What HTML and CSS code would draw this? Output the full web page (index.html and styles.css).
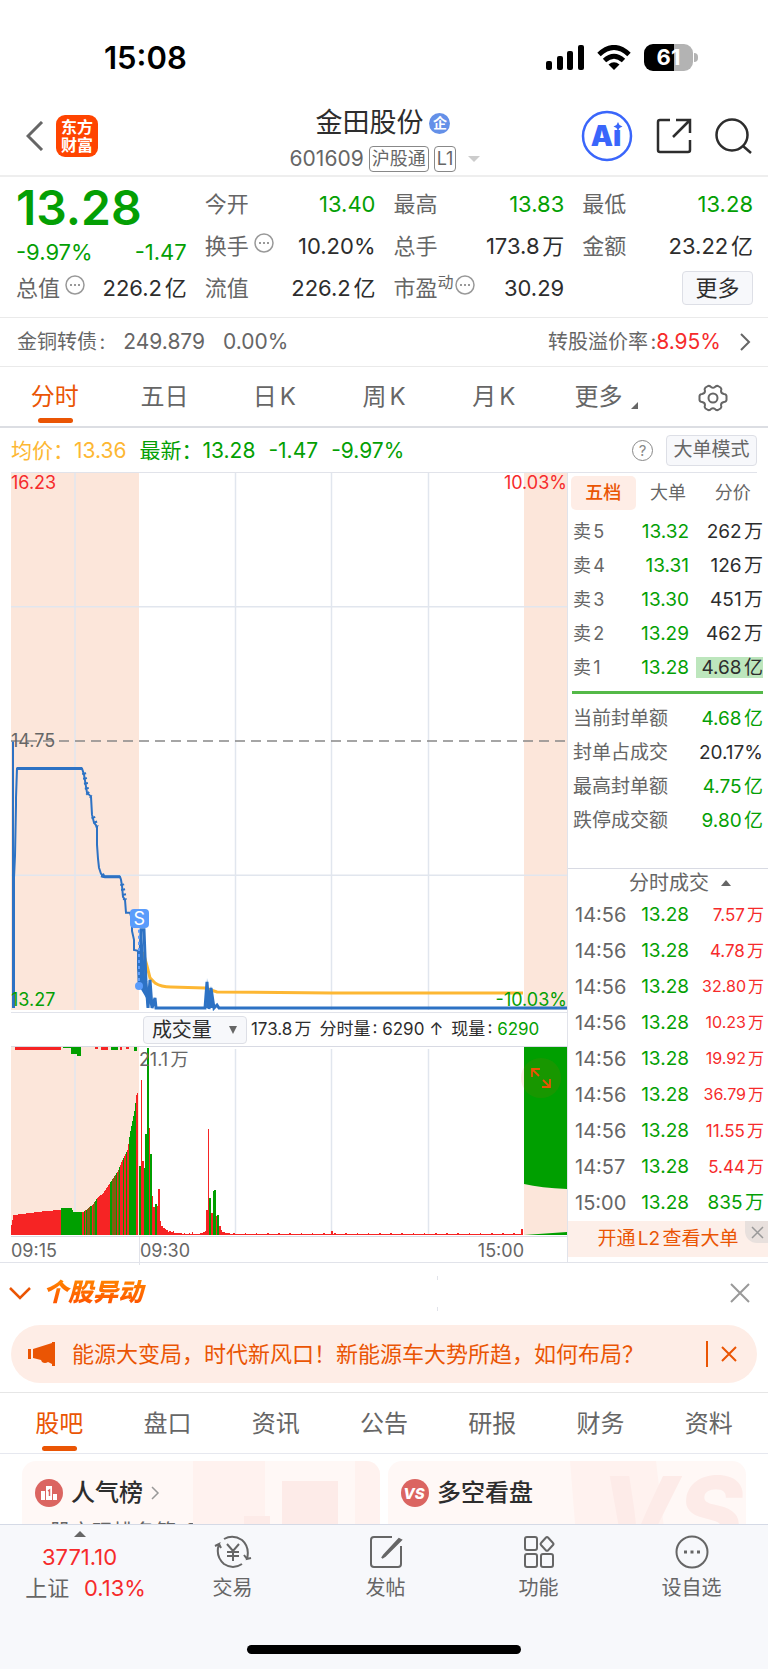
FILE: index.html
```html
<!DOCTYPE html>
<html lang="zh-CN">
<head>
    <meta charset="UTF-8">
    <meta name="viewport" content="width=device-width, initial-scale=1.0">
    <title>金田股份 601609</title>
    <link rel="stylesheet" href="styles.css">
</head>
<body>
    <div class="status-bar">
        <span class="clock">15:08</span>
        <div class="status-icons">
            <svg width="38" height="26" viewBox="0 0 38 26">
                <rect x="0" y="16" width="6" height="9" rx="2"/>
                <rect x="11" y="11" width="6" height="14" rx="2"/>
                <rect x="21" y="6" width="6" height="19" rx="2"/>
                <rect x="32" y="0" width="6" height="25" rx="2"/>
            </svg>
            <svg width="34" height="26" viewBox="0 0 34 26" fill="none" stroke="#000" stroke-width="5">
                <path d="M2 9.500Q17 -4.500 32 9.500"/>
                <path d="M7.500 15.500Q17 7 26.500 15.500"/>
                <path d="M11.500 19.500Q17 15 22.500 19.500L17 25z" fill="#000" stroke="none"/>
            </svg>
            <div class="battery"><span>61</span></div>
        </div>
    </div>

    <header class="header">
        <div class="header-left">
            <button class="icon-btn" aria-label="返回">
                <svg width="18" height="30" viewBox="0 0 18 30" fill="none" stroke="#666" stroke-width="3"><path d="M16 1L2 15L16 29"/></svg>
            </button>
            <a class="brand" href="#">东方<br>财富</a>
        </div>
        <div class="header-title">
            <h1>金田股份 <span class="corp">企</span></h1>
            <div class="code">601609 <span class="tag">沪股通</span><span class="tag">L1</span><i class="caret"></i></div>
        </div>
        <div class="header-right">
            <button class="icon-btn" aria-label="AI">
                <svg width="52" height="52" viewBox="0 0 52 52">
                    <circle cx="26" cy="26" r="24" fill="none" stroke="#3a66fb" stroke-width="2.500"/>
                    <text class="ai-text" x="25" y="36" text-anchor="middle">Aı</text>
                    <path d="M37 12l1.500 3 3 1.500-3 1.500-1.500 3-1.500-3-3-1.500 3-1.500z" fill="#3a66fb"/>
                </svg>
            </button>
            <button class="icon-btn" aria-label="分享">
                <svg width="36" height="36" viewBox="0 0 36 36" fill="none" stroke="#2d2d2d" stroke-width="2.500"><path d="M14 2H4Q2 2 2 4V32Q2 34 4 34H32Q34 34 34 32V22M20 2H34V15M34 2L17 19"/></svg>
            </button>
            <button class="icon-btn" aria-label="搜索">
                <svg width="37" height="36" viewBox="0 0 37 36" fill="none" stroke="#2d2d2d" stroke-width="2.500"><circle cx="17" cy="17" r="15.500"/><path d="M28 28L36 35"/></svg>
            </button>
        </div>
    </header>

    <section class="stats">
        <div class="stat-col">
            <div class="price">13.28</div>
            <div class="change down"><span>-9.97%</span><span>-1.47</span></div>
            <div class="stat last"><span class="label">总值<svg class="more-dots" viewBox="0 0 20 20"><use href="#dots"/></svg></span><span>226.2亿</span></div>
        </div>
        <div class="stat-col">
            <div class="stat"><span class="label">今开</span><span class="down">13.40</span></div>
            <div class="stat"><span class="label">换手<svg class="more-dots" viewBox="0 0 20 20"><use href="#dots"/></svg></span><span>10.20%</span></div>
            <div class="stat"><span class="label">流值</span><span>226.2亿</span></div>
        </div>
        <div class="stat-col">
            <div class="stat"><span class="label">最高</span><span class="down">13.83</span></div>
            <div class="stat"><span class="label">总手</span><span>173.8万</span></div>
            <div class="stat"><span class="label">市盈<small>动</small><svg class="more-dots tight" viewBox="0 0 20 20"><use href="#dots"/></svg></span><span>30.29</span></div>
        </div>
        <div class="stat-col">
            <div class="stat"><span class="label">最低</span><span class="down">13.28</span></div>
            <div class="stat"><span class="label">金额</span><span>23.22亿</span></div>
            <div class="stat end"><button class="more-btn">更多</button></div>
        </div>
    </section>

    <a class="bond" href="#">
        <span class="bond-name">金铜转债:</span>
        <b>249.879</b>
        <b>0.00%</b>
        <span class="premium">转股溢价率:<b class="up">8.95%</b></span>
        <svg width="12" height="18" viewBox="0 0 12 18" fill="none" stroke="#666" stroke-width="2"><path d="M2 1L10 9L2 17"/></svg>
    </a>

    <nav class="period-tabs">
        <button class="active">分时</button>
        <button>五日</button>
        <button>日K</button>
        <button>周K</button>
        <button>月K</button>
        <button class="more-period">更多</button>
        <button aria-label="设置">
            <svg width="30" height="28" viewBox="0 0 30 28" fill="none" stroke="#666" stroke-width="2" stroke-linejoin="round">
                <path d="M10 2Q12 1.500 13 3Q15 4.500 17 3Q18 1.500 20 2L22.500 3.500Q24 5 23 7Q23 9.500 26 10Q28 10 28.500 12V16Q28 18 26 18Q23 18.500 23 21Q24 23 22.500 24.500L20 26Q18 26.500 17 25Q15 23.500 13 25Q12 26.500 10 26L7.500 24.500Q6 23 7 21Q7 18.500 4 18Q2 18 1.500 16V12Q2 10 4 10Q7 9.500 7 7Q6 5 7.500 3.500Z"/>
                <circle cx="15" cy="14" r="4.500"/>
            </svg>
        </button>
    </nav>

    <div class="quote-line">
        <span class="avg">均价：13.36</span>
        <span class="down">最新：13.28</span>
        <span class="down">-1.47</span>
        <span class="down">-9.97%</span>
        <button class="help" aria-label="帮助">?</button>
        <button class="mode-btn">大单模式</button>
    </div>

    <main class="board">
        <div class="charts">
            <div class="price-chart">
                <svg viewBox="0 0 556 538" preserveAspectRatio="none">
                    <rect width="128" height="536" fill="#fce6da"/>
                    <rect x="513" width="43" height="536" fill="#fce6da"/>
                    <path d="M64 0V536M224.500 0V536M320.500 0V536M417.500 0V536M0 133.500H556M0 401.500H556" stroke="#e1e6ee" stroke-width="1.500"/>
                    <path d="M0 267.500H556" stroke="#888" stroke-width="1.500" stroke-dasharray="10 6"/>
                    <path d="M132 478L136 492L139 504L144 509Q150 513 160 513L194 514L206 518L320 519H512" fill="none" stroke="#fdb733" stroke-width="3"/>
                    <path d="M2 268V534M3 534V404L4 382L5 331V324L6 295H71L73 301L75 313L76 319L80 323L81 341L83 349L86 353V371L87 385L88 394L90 400L93 403H109L110 406L111 412L112 423L114 426L115 439H119L121 446V457L123 466V476L127 477V494L128 512" fill="none" stroke="#2d72c4" stroke-width="2"/>
                    <path d="M6 295H71M90 402L94 403H109" fill="none" stroke="#2d72c4" stroke-width="3"/>
                    <path d="M73 299L76 316M76 319L80 323M82 343L86 353M91 401L94 403M111 410L114 426" fill="none" stroke="#2d72c4" stroke-width="4" stroke-dasharray="2 3"/>
                    <path d="M128 512L130 456H133L135 508L137 534L139 506L141 534L144 524L145 534H194L196 508L198 535L200 514L203 534L206 531L208 534H556" fill="none" stroke="#2d72c4" stroke-width="3"/>
                    <path d="M128 512L131 456L136 534L139 506L141 534zM195 534L196 504L198 524L200 512L203 534z" fill="#2d72c4"/>
                    <path d="M128 456V512" stroke="#5a9cfb" stroke-width="2" stroke-dasharray="3 3"/>
                    <circle cx="128" cy="512" r="4" fill="#5a9cfb"/>
                </svg>
                <span class="mark-s">S</span>
                <span class="axis top-left up">16.23</span>
                <span class="axis top-right up">10.03%</span>
                <span class="axis mid-left">14.75</span>
                <span class="axis bottom-left down">13.27</span>
                <span class="axis bottom-right down">-10.03%</span>
            </div>
            <div class="volume-head">
                <label class="indicator">
                    <select aria-label="指标"><option>成交量</option></select>
                </label>
                <span class="volume-now">173.8万 <span>分时量: 6290 ↑</span> <span>现量: <b class="down">6290</b></span></span>
            </div>
            <div class="volume-chart">
                <svg id="volume" viewBox="0 0 556 189" preserveAspectRatio="none">
                    <rect width="128" height="188" fill="#fce6da"/>
                    <rect x="513" width="43" height="188" fill="#fce6da"/>
                    <path d="M64 0V188M224.500 2V188M320.500 2V188M417.500 2V188" stroke="#e1e6ee" stroke-width="1.500"/>
                    <path d="M513 0H556V142Q530 141 513 137Z" fill="#009f00"/>
                    <path d="M513 188L556 185V188Z" fill="#009f00"/>
                    <g id="bars" shape-rendering="crispEdges"></g>
                </svg>
                <span class="axis vol-max">21.1万</span>
                <button class="expand" aria-label="全屏">
                    <svg width="20" height="20" viewBox="0 0 20 20" fill="none" stroke="#ea5504" stroke-width="1.800"><path d="M1 9V1H9M1 1L8 8M19 11V19H11M19 19L12 12"/></svg>
                </button>
            </div>
            <div class="time-axis"><span>09:15</span><span>09:30</span><span>15:00</span></div>
        </div>

        <aside class="side">
            <div class="side-tabs">
                <button class="active">五档</button>
                <button>大单</button>
                <button>分价</button>
            </div>
            <table class="orders">
                <tr><th>卖5</th><td class="down">13.32</td><td>262万</td></tr>
                <tr><th>卖4</th><td class="down">13.31</td><td>126万</td></tr>
                <tr><th>卖3</th><td class="down">13.30</td><td>451万</td></tr>
                <tr><th>卖2</th><td class="down">13.29</td><td>462万</td></tr>
                <tr><th>卖1</th><td class="down">13.28</td><td><span class="filled">4.68亿</span></td></tr>
            </table>
            <div class="ratio"></div>
            <table class="limits">
                <tr><th>当前封单额</th><td class="down">4.68亿</td></tr>
                <tr><th>封单占成交</th><td>20.17%</td></tr>
                <tr><th>最高封单额</th><td class="down">4.75亿</td></tr>
                <tr><th>跌停成交额</th><td class="down">9.80亿</td></tr>
            </table>
            <div class="trades">
                <button class="trades-head">分时成交</button>
                <table>
                    <tr><th>14:56</th><td class="down">13.28</td><td class="up">7.57万</td></tr>
                    <tr><th>14:56</th><td class="down">13.28</td><td class="up">4.78万</td></tr>
                    <tr><th>14:56</th><td class="down">13.28</td><td class="up long">32.80万</td></tr>
                    <tr><th>14:56</th><td class="down">13.28</td><td class="up long">10.23万</td></tr>
                    <tr><th>14:56</th><td class="down">13.28</td><td class="up long">19.92万</td></tr>
                    <tr><th>14:56</th><td class="down">13.28</td><td class="up long">36.79万</td></tr>
                    <tr><th>14:56</th><td class="down">13.28</td><td class="up">11.55万</td></tr>
                    <tr><th>14:57</th><td class="down">13.28</td><td class="up">5.44万</td></tr>
                    <tr><th>15:00</th><td class="down">13.28</td><td class="down short">835万</td></tr>
                </table>
                <div class="l2">
                    <a href="#">开通L2查看大单</a>
                    <button class="l2-close" aria-label="关闭"><svg width="13" height="13" viewBox="0 0 13 13" stroke="#999" stroke-width="1.500"><path d="M1 1L12 12M12 1L1 12"/></svg></button>
                </div>
            </div>
        </aside>
    </main>

    <section class="moves">
        <svg width="22" height="13" viewBox="0 0 22 13" fill="none" stroke="#ea5504" stroke-width="2.500"><path d="M1 1L11 11L21 1"/></svg>
        <h2>个股异动</h2>
        <i class="divider"></i>
        <button class="icon-btn" aria-label="关闭"><svg width="20" height="20" viewBox="0 0 20 20" stroke="#999" stroke-width="2"><path d="M1 1L19 19M19 1L1 19"/></svg></button>
    </section>

    <div class="notice">
        <svg width="27" height="24" viewBox="0 0 27 24" fill="#ea5504"><path d="M0 7H3V17H0zM5 7L24 1V0H27V24H24V22L20 20Q17 22 14 20L13 18L5 16z"/></svg>
        <a href="#">能源大变局，时代新风口！新能源车大势所趋，如何布局？</a>
        <button class="icon-btn" aria-label="关闭"><svg width="16" height="16" viewBox="0 0 16 16" stroke="#ea5504" stroke-width="2"><path d="M1 1L15 15M15 1L1 15"/></svg></button>
    </div>

    <nav class="info-tabs">
        <button class="active">股吧</button>
        <button>盘口</button>
        <button>资讯</button>
        <button>公告</button>
        <button>研报</button>
        <button>财务</button>
        <button>资料</button>
    </nav>

    <section class="cards">
        <a class="card" href="#">
            <svg class="card-art" width="190" height="100" viewBox="0 0 190 100">
                <path d="M3 0H75V55H55V100H3zM165 0H190V100H165z" fill="#fff2ef"/>
                <path d="M92 20H148V100H92zM54 55H80V100H54z" fill="#fdebe8"/>
            </svg>
            <h3>
                <svg width="28" height="28" viewBox="0 0 28 28"><circle cx="14" cy="14" r="14" fill="#db6561"/><path d="M6 12H10V21H6zM11 7H17V21H11zM18 15H22V21H18z" fill="#fff"/><path d="M13 12L14.500 11V17" fill="none" stroke="#db6561" stroke-width="1.500"/></svg>
                人气榜
                <svg class="go" width="9" height="14" viewBox="0 0 9 14" fill="none" stroke="#999" stroke-width="1.500"><path d="M1 1L7 7L1 13"/></svg>
            </h3>
            <p>股市现排名第<span>27</span>名</p>
        </a>
        <a class="card" href="#">
            <svg class="card-art" width="190" height="100" viewBox="0 0 190 100">
                <path d="M14 0H100L112 100H22z" fill="#fff2ef"/>
                <text class="vs-big" x="44" y="88">VS</text>
            </svg>
            <h3>
                <svg width="28" height="28" viewBox="0 0 28 28"><circle cx="14" cy="14" r="14" fill="#db6561"/><text class="vs" x="13" y="20" text-anchor="middle">VS</text></svg>
                多空看盘
            </h3>
        </a>
    </section>

    <footer class="bottom-bar">
        <nav>
            <a class="index" href="#"><i class="caret-up"></i><span class="up">3771.10</span><span class="index-name">上证<b class="up">0.13%</b></span></a>
            <a href="#">
                <svg width="40" height="34" viewBox="0 0 40 34"><path d="M11 4Q20 -1 29 5Q37 12 34 24L38 23M34 24L31 20M29 29Q20 35 11 29Q2 21 6 9L2 11M6 9L8 13M14 9L20 16L26 9M20 16V26M14 17H26M14 21H26"/></svg>
                交易
            </a>
            <a href="#">
                <svg width="34" height="34" viewBox="0 0 34 34"><path d="M23 2H5Q2 2 2 5V29Q2 32 5 32H29Q32 32 32 29V11"/><path d="M30 4L15 20L13 23L16 21L32 5z" fill="#666"/></svg>
                发帖
            </a>
            <a href="#">
                <svg width="32" height="34" viewBox="0 0 32 34"><rect x="2" y="2" width="12" height="13" rx="2"/><rect x="2" y="19" width="12" height="13" rx="2"/><rect x="18" y="19" width="12" height="13" rx="2"/><path d="M23 2.500Q24 1.500 25 2.500L30 8Q31 9 30 10L25 15.500Q24 16 23 15.500L18 10Q17 9 18 8z"/></svg>
                功能
            </a>
            <a href="#">
                <svg width="34" height="34" viewBox="0 0 34 34"><circle cx="17" cy="17" r="15.500"/><path d="M9 17h3M15.500 17h3M22 17h3" stroke-width="3"/></svg>
                设自选
            </a>
        </nav>
        <div class="home-indicator"></div>
    </footer>

    <svg width="0" height="0" class="defs">
        <symbol id="dots" viewBox="0 0 20 20">
            <circle cx="10" cy="10" r="9" fill="none" stroke="#999" stroke-width="1.500"/>
            <path d="M5 10h2M9 10h2M13 10h2" stroke="#999" stroke-width="2"/>
        </symbol>
    </svg>

    <script src="script.js"></script>
</body>
</html>
```
FILE: styles.css
```css
* {
    box-sizing: border-box;
}
body {
    margin: 0;
    font-family: Inter, "Noto Sans CJK SC", sans-serif;
    font-size: 20px;
    line-height: 1.2;
    color: #2d2d2d;
    background-color: #fff;
    text-autospace: normal;
}
button, select {
    font: inherit;
    color: inherit;
    background: none;
    border: none;
    padding: 0;
    cursor: pointer;
}
a {
    color: inherit;
    text-decoration: none;
}
h1, h2, h3, p {
    margin: 0;
    font-weight: 400;
}
b, th {
    font-weight: 400;
}
svg {
    display: block;
    flex: none;
}
.defs {
    position: absolute;
}
.up {
    color: #f62b2b;
}
.down {
    color: #049f04;
}
.icon-btn {
    display: block;
}

/* status bar */
.status-bar {
    display: flex;
    justify-content: space-between;
    align-items: center;
    height: 96px;
    padding: 19px 75px 0 104px;
}
.clock {
    font-size: 31px;
    font-weight: 600;
    color: #000;
}
.status-icons {
    display: flex;
    align-items: center;
    gap: 13px;
}
.battery {
    position: relative;
    width: 49px;
    height: 27px;
    border-radius: 9px;
    background: linear-gradient(90deg, #000 61%, #b3b3b3 61%);
    color: #fff;
    font-size: 22px;
    font-weight: 700;
    line-height: 27px;
    text-align: center;
}
.battery::after {
    content: "";
    position: absolute;
    right: -5px;
    top: 9px;
    width: 4px;
    height: 9px;
    border-radius: 0 4px 4px 0;
    background-color: #b3b3b3;
}

/* header */
.header {
    display: grid;
    grid-template-columns: 1fr auto 1fr;
    align-items: center;
    height: 81px;
    padding: 0 16px 0 26px;
    border-bottom: 2px solid #eee;
}
.header-left, .header-right {
    display: flex;
    align-items: center;
}
.header-left {
    gap: 12px;
}
.header-right {
    justify-content: flex-end;
    gap: 23px;
}
.brand {
    width: 42px;
    height: 42px;
    padding-top: 3px;
    border-radius: 9px;
    background-color: #ff4400;
    color: #fff;
    font-size: 16px;
    font-weight: 700;
    line-height: 18px;
    text-align: center;
}
.header-title {
    padding: 8px 8px 0 0;
}
.header-title h1 {
    display: flex;
    justify-content: center;
    align-items: center;
    gap: 6px;
    padding-right: 4px;
    font-size: 27px;
    line-height: 38px;
}
.corp {
    width: 21px;
    height: 21px;
    border-radius: 50%;
    background-color: #6490e8;
    color: #fff;
    font-size: 14px;
    font-weight: 700;
    line-height: 20px;
    text-align: center;
}
.code {
    display: flex;
    align-items: center;
    gap: 5px;
    font-size: 21px;
    line-height: 34px;
    color: #666;
}
.tag {
    padding: 0 2px;
    border: 1px solid #888;
    border-radius: 4px;
    font-size: 18px;
    line-height: 24px;
}
.caret {
    margin-left: 7px;
    border: 6px solid transparent;
    border-top-color: #ccc;
    border-bottom: none;
}
.ai-text {
    font-family: Inter, sans-serif;
    font-size: 28px;
    font-weight: 900;
    fill: #3a66fb;
}

/* stats */
.stats {
    display: grid;
    grid-template-columns: repeat(4, 1fr);
    gap: 18px;
    padding: 6px 15px 8px 16px;
    font-size: 22px;
    border-bottom: 1px solid #eaeaea;
}
.price {
    height: 50px;
    font-size: 48px;
    font-weight: 600;
    line-height: 50px;
    color: #049f04;
}
.change, .stat {
    display: flex;
    justify-content: space-between;
    align-items: center;
    height: 38px;
    white-space: nowrap;
}
.stat {
    height: 42px;
}
.stat.last {
    height: 34px;
}
.stat.end {
    justify-content: flex-end;
}
.label {
    display: flex;
    color: #666;
}
.label small {
    font-size: 16px;
    line-height: 14px;
}
.more-dots {
    width: 20px;
    height: 20px;
    margin-left: 5px;
}
.more-dots.tight {
    margin-left: 1px;
}
.more-btn {
    width: 71px;
    height: 34px;
    border: 1px solid #dddfe6;
    border-radius: 4px;
    background-color: #f7f8fb;
}

/* bond */
.bond {
    display: flex;
    align-items: center;
    gap: 18px;
    height: 49px;
    padding: 0 17px;
    color: #666;
    border-bottom: 1px solid #eaeaea;
}
.bond b {
    font-size: 21px;
}
.premium {
    margin-left: auto;
}

/* tabs */
.period-tabs {
    display: grid;
    grid-template-columns: repeat(7, 1fr);
    height: 61px;
    border-bottom: 2px solid #dcdee3;
}
.period-tabs button, .info-tabs button {
    position: relative;
    display: flex;
    justify-content: center;
    align-items: center;
    padding-top: 2px;
    font-size: 24px;
    color: #666;
}
.period-tabs .active, .info-tabs .active {
    color: #ea5504;
}
.period-tabs .active::after, .info-tabs .active::after {
    content: "";
    position: absolute;
    left: calc(50% - 17px);
    bottom: 3px;
    width: 35px;
    height: 5px;
    border-radius: 3px;
    background-color: #ea5504;
}
.period-tabs .more-period {
    padding-left: 6px;
}
.more-period::after {
    content: "";
    align-self: flex-end;
    margin: 0 0 17px 9px;
    border-left: 7px solid transparent;
    border-bottom: 7px solid #666;
}

/* quote line */
.quote-line {
    display: flex;
    align-items: center;
    gap: 13px;
    height: 45px;
    margin: 0 11px;
    padding-top: 1px;
    font-size: 21px;
    border-bottom: 1px solid #e1e3ea;
}
.avg {
    color: #fdb733;
}
.help {
    width: 21px;
    height: 21px;
    margin-left: auto;
    border: 1px solid #888;
    border-radius: 50%;
    font-size: 15px;
    line-height: 19px;
    color: #888;
}
.mode-btn {
    width: 91px;
    height: 31px;
    border: 1px solid #dddfe6;
    border-radius: 4px;
    background-color: #f7f8fb;
    font-size: 19px;
    color: #666;
}

/* charts */
.board {
    display: grid;
    grid-template-columns: 1fr 201px;
    padding-left: 11px;
    border-bottom: 1px solid #e1e3ea;
}
.price-chart, .volume-chart {
    position: relative;
}
.price-chart {
    height: 540px;
    border-bottom: 1px solid #e1e3ea;
}
.price-chart > svg, .volume-chart > svg {
    width: 100%;
    height: 100%;
}
.axis {
    position: absolute;
    font-size: 18px;
    line-height: 20px;
    color: #666;
}
.axis.up {
    color: #f62b2b;
}
.axis.down {
    color: #049f04;
}
.top-left {
    top: 0;
    left: 0;
}
.top-right {
    top: 0;
    right: 0;
}
.mid-left {
    top: 258px;
    left: 0;
}
.bottom-left {
    bottom: 2px;
    left: 0;
}
.bottom-right {
    right: 0;
    bottom: 2px;
}
.mark-s {
    position: absolute;
    left: calc(23% - 9px);
    top: 436px;
    width: 19px;
    height: 19px;
    border-radius: 4px;
    background-color: #5a9cfb;
    color: #fff;
    font-size: 18px;
    line-height: 19px;
    text-align: center;
}
.volume-head {
    display: flex;
    align-items: center;
    gap: 4px;
    height: 34px;
    padding-left: 23%;
    font-size: 17px;
    white-space: nowrap;
    border-bottom: 1px solid #d8dae3;
}
.volume-now {
    display: flex;
    gap: 8px;
}
.indicator {
    position: relative;
    margin-left: 4px;
}
.indicator select {
    display: block;
    appearance: none;
    width: 104px;
    height: 28px;
    padding-left: 8px;
    border: 1px solid #dddfe6;
    border-radius: 4px;
    background-color: #f7f8fb;
    font-size: 20px;
    line-height: 24px;
}
.indicator::after {
    content: "";
    position: absolute;
    right: 10px;
    top: 10px;
    border: 4px solid transparent;
    border-top: 8px solid #666;
    border-bottom: none;
}
.volume-chart {
    height: 190px;
    border-bottom: 1px solid #d8dae3;
}
.vol-max {
    top: 3px;
    left: 23%;
}
.expand {
    position: absolute;
    right: 6px;
    top: 11px;
    display: flex;
    justify-content: center;
    align-items: center;
    width: 40px;
    height: 40px;
    border-radius: 50%;
    background-color: rgba(234, 85, 4, 0.1);
}
.time-axis {
    display: grid;
    grid-template-columns: 23% 1fr auto;
    height: 25px;
    font-size: 18px;
    line-height: 28px;
    color: #666;
}
.time-axis span:nth-child(2) {
    border-left: 1px solid #e1e3ea;
}
.time-axis span:last-child {
    padding-right: 43px;
}

/* side panel */
.side {
    display: flex;
    flex-direction: column;
    border-left: 1px solid #e1e3ea;
    font-size: 19px;
}
.side-tabs {
    display: grid;
    grid-template-columns: repeat(3, 1fr);
    height: 34px;
    margin: 3px 3px 5px;
    font-size: 18px;
    color: #666;
}
.side-tabs .active {
    border-radius: 5px;
    background-color: #feede6;
    color: #ea5504;
    font-weight: 500;
}
table {
    width: 100%;
    border-collapse: collapse;
    table-layout: fixed;
}
th, td {
    padding: 0;
    text-align: right;
    white-space: nowrap;
}
th {
    text-align: left;
    color: #666;
}
.orders, .limits {
    width: auto;
    margin: 0 5px;
}
.orders tr, .limits tr {
    height: 34px;
}
.orders th {
    width: 50px;
    font-size: 18px;
}
.orders td:nth-child(2) {
    width: 66px;
}
.filled {
    display: inline-block;
    padding-left: 5px;
    background-color: #bde6bd;
    line-height: 21px;
}
.ratio {
    height: 3px;
    margin: 6px 5px 8px 4px;
    background-color: #54b948;
}
.limits th {
    width: 110px;
}
.trades {
    margin-top: auto;
    border-top: 1px solid #d8dae3;
}
.trades table {
    width: auto;
    margin: 0 4px 0 7px;
}
.trades tr {
    height: 36px;
}
.trades th {
    width: 52px;
    font-size: 20px;
}
.trades td {
    width: 62px;
}
.trades td:last-child {
    width: 75px;
    font-size: 17px;
}
.trades td.long {
    font-size: 16px;
}
.trades td.short {
    font-size: 19px;
}
.trades-head {
    display: flex;
    justify-content: center;
    align-items: center;
    gap: 12px;
    width: 100%;
    height: 28px;
    padding-left: 24px;
    font-size: 20px;
    color: #666;
}
.trades-head::after {
    content: "";
    border: 5px solid transparent;
    border-bottom: 6px solid #666;
    border-top: none;
}
.l2 {
    display: flex;
    position: relative;
    justify-content: center;
    align-items: center;
    height: 36px;
    margin-bottom: 5px;
    background-color: #fdefe9;
    color: #ea5504;
}
.l2-close {
    position: absolute;
    top: 0;
    right: 0;
    width: 23px;
    height: 22px;
    padding: 0 0 0 6px;
    border-radius: 0 0 0 12px;
    background-color: #e8e0dd;
}

/* stock moves */
.moves {
    display: flex;
    align-items: center;
    height: 60px;
    padding: 0 18px 0 9px;
}
.moves h2 {
    margin-left: 12px;
    padding: 0 4px 2px 0;
    font-size: 25px;
    font-weight: 900;
    font-style: italic;
    background: linear-gradient(#ff8a00, #ff4a00);
    background-clip: text;
    color: transparent;
}
.divider {
    width: 1px;
    height: 35px;
    margin-left: auto;
    background: linear-gradient(#e1e3ea 4px, transparent 4px 31px, #e1e3ea 31px);
}
.moves button {
    margin-left: 292px;
}
.notice {
    display: flex;
    align-items: center;
    height: 58px;
    margin: 2px 11px 9px;
    padding: 0 20px 0 17px;
    border-radius: 29px;
    background-color: #feede6;
    color: #ea5504;
    font-size: 22px;
}
.notice a {
    margin-left: 17px;
    white-space: nowrap;
}
.notice button {
    margin-left: auto;
    padding: 5px 0 5px 13px;
    border-left: 2px solid #ea5504;
}

/* info tabs */
.info-tabs {
    display: grid;
    grid-template-columns: repeat(7, 1fr);
    height: 62px;
    padding: 0 5px;
    border-top: 1px solid #e6e6e6;
    box-shadow: inset 0 -1px #e6e8ef;
}

/* cards */
.cards {
    display: grid;
    grid-template-columns: 1fr 1fr;
    gap: 8px;
    padding: 7px 22px 0;
}
.card {
    position: relative;
    height: 100px;
    padding: 15px 13px 0;
    border-radius: 14px;
    background-color: #fff8f6;
    overflow: hidden;
}
.card h3 {
    position: relative;
    display: flex;
    align-items: center;
    gap: 8px;
    font-size: 24px;
    font-weight: 500;
    line-height: 34px;
}
.card p {
    padding: 7px 0 0 15px;
    font-size: 21px;
    line-height: 30px;
    color: #666;
}
.card p span {
    padding: 0 6px;
}
.card-art {
    position: absolute;
    top: 0;
    right: 0;
}
.vs {
    font-size: 15px;
    font-weight: 800;
    font-style: italic;
    fill: #fff;
}
.vs-big {
    font-size: 100px;
    font-weight: 800;
    font-style: italic;
    fill: #fdebe8;
}

/* bottom bar */
.bottom-bar {
    position: fixed;
    left: 0;
    right: 0;
    bottom: 0;
    height: 145px;
    border-top: 1px solid #d5dae6;
    background-color: #f7f8fb;
    color: #666;
}
.bottom-bar nav {
    display: grid;
    grid-template-columns: repeat(5, 1fr);
    height: 120px;
    padding-left: 3px;
}
.bottom-bar a {
    display: flex;
    flex-direction: column;
    align-items: center;
    padding-top: 10px;
    line-height: 38px;
}
.bottom-bar a svg {
    fill: none;
    stroke: #666;
    stroke-width: 2;
}
.bottom-bar .index {
    padding-top: 6px;
    font-size: 22px;
    line-height: 31px;
}
.index-name {
    padding-left: 12px;
}
.index b {
    padding-left: 12px;
}
.caret-up {
    margin-bottom: 5px;
    border: 6px solid transparent;
    border-bottom: 6px solid #666;
    border-top: none;
}
.home-indicator {
    width: 274px;
    height: 9px;
    margin: 0 auto;
    border-radius: 5px;
    background-color: #000;
}
```
FILE: script.js
```js
const bars = document.getElementById('bars');
const RED = '#f62424';
const GREEN = '#009f00';
const BASE = 188;

function addBar(x, y, width, height, color) {
    const rect = document.createElementNS('http://www.w3.org/2000/svg', 'rect');
    rect.setAttribute('x', x);
    rect.setAttribute('y', y);
    rect.setAttribute('width', width);
    rect.setAttribute('height', height);
    rect.setAttribute('fill', color);
    bars.appendChild(rect);
}

// call auction: [x, height] outline, bars interpolated between
const auction = [
    [0, 10], [2, 20], [19, 22], [34, 24], [49, 25], [50, 27], [60, 27], [62, 23], [72, 23],
    [77, 27], [82, 31], [86, 37], [92, 42], [99, 53], [106, 63], [111, 75], [116, 85],
    [119, 104], [123, 124], [125, 140], [127, 144]
];
// green and mixed columns, everything else is red
const greenCols = [73, 75, 79, 80, 84, 85, 99, 100, 105, 108, 112, 115, 118, 119, 120, 121, 122, 123, 124];
const mixedCols = [76, 77, 78, 82, 83, 101, 102, 103, 104, 107];

for (let x = 0; x < 127; x++) {
    const i = auction.findIndex(p => p[0] > x);
    const [x0, h0] = auction[i - 1];
    const [x1, h1] = auction[i];
    const h = Math.round(h0 + (h1 - h0) * (x - x0) / (x1 - x0));
    let color = RED;
    if ((x >= 50 && x < 71) || greenCols.includes(x)) color = GREEN;
    if (mixedCols.includes(x)) color = '#855a14';
    addBar(x, BASE - h, 1, h, color);
}

// unmatched volume along the top edge
[[4, 46, 3, RED], [52, 8, 1, GREEN], [60, 10, 7, GREEN], [84, 3, 2, RED], [90, 7, 3, RED],
 [100, 7, 3, GREEN], [109, 2, 3, RED], [115, 3, 2, RED], [123, 3, 4, GREEN]].forEach(b => {
    addBar(b[0], 0, b[1], b[2], b[3]);
});
addBar(66, 0, 4, 9, GREEN);

// continuous trading, one bar a minute
const minutes = [
    [69, 1], [155, 0], [74, 0], [67, 1], [101, 1], [187, 1], [107, 0], [81, 1], [39, 0], [28, 0],
    [31, 1], [29, 0], [46, 0], [14, 0], [9, 0], [7, 0], [6, 0], [5, 0], [3, 0], [4, 0],
    [3, 0], [4, 0], [2, 0], [2, 0], [2, 0], [2, 0], [2, 0], [1, 0], [2, 0], [1, 0],
    [1, 0], [2, 0], [1, 0], [3, 0], [1, 0], [1, 0], [1, 0], [1, 0], [2, 0], [2, 0],
    [3, 0], [4, 0], [25, 0], [106, 0], [37, 1], [22, 0], [44, 1], [45, 1], [19, 0], [20, 1],
    [9, 0], [5, 0], [3, 0], [3, 0], [2, 0], [2, 0], [2, 0]
];
for (let m = 0; m < 240; m++) {
    let [h, green] = minutes[m] || [m % 7 === 3 ? 2 : 1, 0];
    if (m === 120) h = 4;
    if (m === 239) h = 6;
    addBar(128 + m * 1.6, BASE - h, 1.6, h, green ? GREEN : RED);
}
```
